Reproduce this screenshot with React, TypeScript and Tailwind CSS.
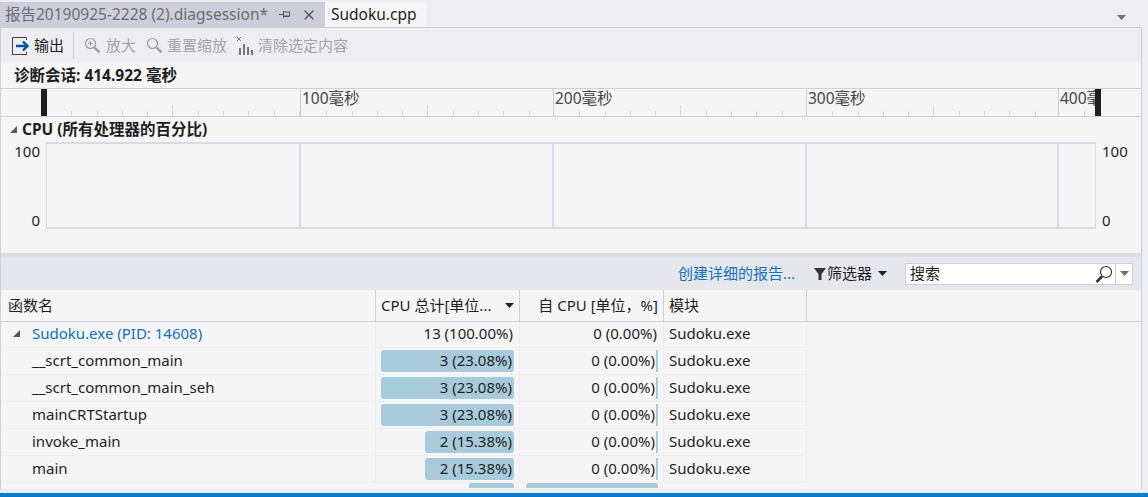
import React from 'react';
import { X } from 'lucide-react';

const rows = [
  { name: '__scrt_common_main', total: '3 (23.08%)', bar: 133 },
  { name: '__scrt_common_main_seh', total: '3 (23.08%)', bar: 133 },
  { name: 'mainCRTStartup', total: '3 (23.08%)', bar: 133 },
  { name: 'invoke_main', total: '2 (15.38%)', bar: 89 },
  { name: 'main', total: '2 (15.38%)', bar: 89 },
];

const rulerSegments = ['w-[254px]', 'w-[253px]', 'w-[253px]', 'w-[252px]', 'w-[38px]'];
const chartSegments = ['w-[252px]', 'w-[253px]', 'w-[253px]', 'w-[252px]', 'w-[38px]'];
const rulerLabels = ['', '100毫秒', '200毫秒', '300毫秒', '400毫秒'];

const Corner = () => (
  <svg width="9" height="9" viewBox="0 0 9 9" className="shrink-0">
    <polygon points="8,1 8,8 1,8" fill="#595959" />
  </svg>
);

const Caret = ({ color = '#1e1e1e' }: { color?: string }) => (
  <svg width="9" height="5" viewBox="0 0 9 5" className="shrink-0">
    <polygon points="0,0 9,0 4.5,5" fill={color} />
  </svg>
);

const Magnifier = ({ plus, minus }: { plus?: boolean; minus?: boolean }) => (
  <svg width="17" height="17" viewBox="0 0 17 17" className="shrink-0">
    <circle cx="6.5" cy="6.5" r="5" fill="none" stroke="#9a9c9e" strokeWidth="1.2" />
    <path d="M10.5 10.5L15.5 15.5" stroke="#9a9c9e" strokeWidth="2.4" />
    {(plus || minus) && <path d="M4 6.5h5" stroke="#9a9c9e" />}
    {plus && <path d="M6.5 4v5" stroke="#9a9c9e" />}
  </svg>
);

const App: React.FC = () => {
  return (
    <div className="w-[1148px] h-[497px] overflow-hidden flex flex-col bg-[#eeeef2] text-[15px] text-[#1e1e1e] font-['Noto_Sans','Noto_Sans_CJK_SC',sans-serif]">
      {/* Tabs */}
      <div className="h-[27px] pt-[2px] flex shrink-0 pr-[22px] text-[15.5px]">
        <div className="w-[325px] bg-[#cccedb] text-[#6d6d70] flex items-center pl-[5px] pr-[8px] whitespace-nowrap">
          <span className="flex-1">报告20190925-2228 (2).diagsession*</span>
          <svg width="11" height="9" viewBox="0 0 11 9" className="mr-[11px]">
            <path d="M0 4.5h4M4.5 1v7M4.5 2h6v4h-6M4.5 6.5h6" fill="none" stroke="#555" />
          </svg>
          <X size={16} className="text-[#555]" />
        </div>
        <div className="w-[101px] bg-[#f5f5f5] pl-[6px] flex items-center">Sudoku.cpp</div>
        <div className="flex-1 flex items-center justify-end pt-[6px]">
          <Caret color="#717171" />
        </div>
      </div>

      <div className="h-[462px] shrink-0 flex flex-col mr-[6px] border-l border-r border-t border-[#ccced8]">
        {/* Toolbar */}
        <div className="h-[35px] shrink-0 flex items-center pl-[11px] text-[#a2a4a5] whitespace-nowrap">
          <svg width="20" height="18" viewBox="0 0 20 18" className="mr-[2px] shrink-0">
            <path d="M14.5 3V.5H.5v17h14V15" fill="none" stroke="#424242" />
            <path d="M4 9h11M11 4.5L15.5 9 11 13.5" fill="none" stroke="#00539c" strokeWidth="2.4" />
          </svg>
          <span className="text-[#1e1e1e]">输出</span>
          <span className="w-px h-[27px] bg-[#ccced8] ml-[9px] mr-[10px]" />
          <Magnifier plus />
          <span className="ml-[5px]">放大</span>
          <span className="ml-[10px]">
            <Magnifier />
          </span>
          <span className="ml-[4px]">重置缩放</span>
          <svg width="17" height="20" viewBox="0 0 17 20" className="ml-[9px] mr-[5px] shrink-0">
            <path d="M1 1l4 4M5 1L1 5" stroke="#777" fill="none" />
            <path d="M3 12h2v7H3zM7 8h2v11H7zM11 11h2v8h-2zM15 14h2v5h-2z" fill="#777" />
          </svg>
          <span>清除选定内容</span>
        </div>

        {/* Session header */}
        <div className="h-[25px] shrink-0 bg-[#f5f5f5] flex items-center pl-[13px] font-bold text-[15.5px]">
          诊断会话: 414.922 毫秒
        </div>

        {/* Ruler */}
        <div className="h-[29px] shrink-0 bg-[#f5f5f5] border-y border-[#ccced8] pl-[45px] flex relative">
          <span className="absolute left-[40px] top-0 bottom-0 w-[6px] bg-[#1e1e1e]" />
          <span className="absolute left-[1094px] top-0 bottom-0 w-[6px] bg-[#1e1e1e] z-10" />
          {rulerSegments.map((w, i) => (
            <div key={i} className={`${w} h-full relative ${i === 4 ? 'overflow-hidden' : ''} ${i > 0 ? 'border-l border-[#ccced8]' : ''}`}>
              <span className="block pl-[1px] text-[#444] text-[15.5px] leading-[18px] whitespace-nowrap">{rulerLabels[i]}</span>
              <div className="absolute bottom-0 left-[1px] right-0 flex items-end overflow-hidden">
                {Array.from({ length: 10 }).map((_, t) => (
                  <span key={t} className={`w-[25.3px] shrink-0 border-r border-[#d6d7df] ${t === 4 ? 'h-[11px]' : 'h-[5px]'}`} />
                ))}
              </div>
            </div>
          ))}
        </div>

        {/* CPU chart */}
        <div className="h-[136px] shrink-0 bg-[#f5f5f5] flex flex-col">
          <div className="h-[25px] flex items-center pl-[8px] gap-[4px] font-bold text-[15.5px]">
            <Corner />
            <span>CPU (所有处理器的百分比)</span>
          </div>
          <div className="flex h-[87px]">
            <div className="w-[45px] shrink-0 flex flex-col justify-between items-end pr-[6px] leading-[18px]">
              <span>100</span>
              <span>0</span>
            </div>
            <div className="flex border-2 border-[#d9dae3] w-[1050px] h-[87px] border-l border-r">
              {chartSegments.map((w, i) => (
                <div key={i} className={`${w} shrink-0 ${i > 0 ? 'border-l-2 border-[#d9dae3]' : ''}`} />
              ))}
            </div>
            <div className="flex-1 flex flex-col justify-between pl-[6px] leading-[18px]">
              <span>100</span>
              <span>0</span>
            </div>
          </div>
        </div>

        {/* Splitter */}
        <div className="h-[4px] shrink-0 bg-[#dcdde2]" />

        {/* Filter bar */}
        <div className="h-[33px] shrink-0 bg-[#e6e7ed] flex items-center justify-end pr-[8px] whitespace-nowrap">
          <span className="text-[#0e70c0] mr-[19px]">创建详细的报告...</span>
          <svg width="12" height="12" viewBox="0 0 12 12" className="mr-[1px]">
            <polygon points="0,0 12,0 7.5,6 7.5,12 4.5,12 4.5,6" fill="#333" />
          </svg>
          <span className="mr-[6px]">筛选器</span>
          <Caret />
          <div className="ml-[18px] w-[228px] h-[22px] bg-white border border-[#cccedb] flex items-center">
            <span className="pl-[4px] flex-1">搜索</span>
            <svg width="18" height="18" viewBox="0 0 18 18" className="mr-[2px]">
              <circle cx="11" cy="7" r="5.5" fill="none" stroke="#333" strokeWidth="1.2" />
              <path d="M7 11.5L1.5 17" stroke="#333" strokeWidth="2.6" />
            </svg>
            <span className="w-[17px] h-full border-l border-[#cccedb] flex items-center justify-center">
              <Caret color="#717171" />
            </span>
          </div>
        </div>

        {/* Table */}
        <div className="flex-1 bg-[#f5f5f5] min-h-0 overflow-hidden">
          <div className="h-[32px] flex border-b border-[#ccced8] whitespace-nowrap">
            <div className="w-[375px] pl-[7px] flex items-center border-r border-[#ccced8]">函数名</div>
            <div className="w-[144px] pl-[5px] pr-[5px] flex items-center justify-between border-r border-[#ccced8]">
              <span>CPU 总计[单位...</span>
              <Caret />
            </div>
            <div className="w-[144px] pr-[5px] flex items-center justify-end border-r border-[#ccced8]">自 CPU [单位，%]</div>
            <div className="w-[143px] pl-[5px] flex items-center border-r border-[#ccced8]">模块</div>
          </div>
          <div className="h-[26px] flex w-[806px] border-b border-[#eeeef0] whitespace-nowrap">
            <div className="w-[375px] flex items-center pl-[11px] pb-[2px] gap-[11px] text-[#0e70c0] border-r border-[#eeeef0]">
              <Corner />
              <span>Sudoku.exe (PID: 14608)</span>
            </div>
            <div className="w-[144px] flex items-center justify-end pr-[6px] pb-[2px] border-r border-[#eeeef0]">13 (100.00%)</div>
            <div className="w-[144px] flex items-center justify-end pr-[6px] pb-[2px] border-r border-[#eeeef0]">0 (0.00%)</div>
            <div className="w-[143px] flex items-center pl-[5px] pb-[2px] border-r border-[#eeeef0]">Sudoku.exe</div>
          </div>
          {rows.map((row) => (
            <div key={row.name} className="h-[27px] flex w-[806px] border-b border-[#eeeef0] whitespace-nowrap">
              <div className="w-[375px] flex items-center pl-[31px] pb-[2px] border-r border-[#eeeef0]">{row.name}</div>
              <div className="w-[144px] flex items-center justify-end pr-[5px] border-r border-[#eeeef0]">
                <div className="h-[22px] rounded-[3px] bg-[#a8cbdc] flex items-center justify-end pr-[2px] pb-[2px]" style={{ width: row.bar }}>
                  {row.total}
                </div>
              </div>
              <div className="w-[144px] flex items-center justify-end pr-[5px] border-r border-[#eeeef0]">
                <div className="h-[22px] border-r-2 border-[#a8cbdc] flex items-center pr-[1px] pb-[2px]">0 (0.00%)</div>
              </div>
              <div className="w-[143px] flex items-center pl-[5px] pb-[2px] border-r border-[#eeeef0]">Sudoku.exe</div>
            </div>
          ))}
          {/* clipped next row */}
          <div className="h-[5px] flex w-[806px] overflow-hidden">
            <div className="w-[375px]" />
            <div className="w-[144px] flex justify-end pr-[6px]">
              <div className="w-[45px] h-[22px] rounded-[3px] bg-[#a8cbdc]" />
            </div>
            <div className="w-[144px] flex justify-end pr-[6px]">
              <div className="w-[132px] h-[22px] rounded-[3px] bg-[#a8cbdc]" />
            </div>
          </div>
        </div>
      </div>

      {/* Status bar */}
      <div className="h-[4px] shrink-0 mt-auto bg-[#007acc]" />
    </div>
  );
};

export default App;
